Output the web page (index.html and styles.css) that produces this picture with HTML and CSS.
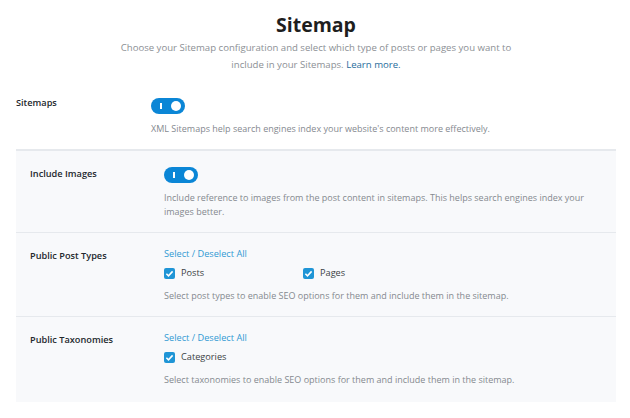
FILE: index.html
```html
<!DOCTYPE html>
<html lang="en">
<head>
    <meta charset="UTF-8">
    <meta name="viewport" content="width=device-width, initial-scale=1.0">
    <title>Sitemap</title>
    <link rel="stylesheet" href="styles.css">
</head>
<body>
    <div class="page">
        <header class="intro">
            <h1>Sitemap</h1>
            <p>Choose your Sitemap configuration and select which type of posts or pages you want to<br>include in your Sitemaps. <a href="#">Learn more.</a></p>
        </header>

        <div class="setting main-setting">
            <div class="setting-label">Sitemaps</div>
            <div class="setting-body">
                <span class="toggle on"><span class="knob"></span></span>
                <p class="desc">XML Sitemaps help search engines index your website's content more effectively.</p>
            </div>
        </div>

        <div class="panel">
            <div class="setting">
                <div class="setting-label">Include Images</div>
                <div class="setting-body">
                    <span class="toggle on"><span class="knob"></span></span>
                    <p class="desc">Include reference to images from the post content in sitemaps. This helps search engines index your images better.</p>
                </div>
            </div>

            <div class="setting">
                <div class="setting-label">Public Post Types</div>
                <div class="setting-body">
                    <a href="#" class="select-all">Select / Deselect All</a>
                    <div class="checks">
                        <label class="check"><span class="box"><svg viewBox="0 0 12 12"><path d="M2.6 6.2l2.3 2.3 4.5-4.8" /></svg></span>Posts</label>
                        <label class="check"><span class="box"><svg viewBox="0 0 12 12"><path d="M2.6 6.2l2.3 2.3 4.5-4.8" /></svg></span>Pages</label>
                    </div>
                    <p class="desc">Select post types to enable SEO options for them and include them in the sitemap.</p>
                </div>
            </div>

            <div class="setting">
                <div class="setting-label">Public Taxonomies</div>
                <div class="setting-body">
                    <a href="#" class="select-all">Select / Deselect All</a>
                    <div class="checks">
                        <label class="check"><span class="box"><svg viewBox="0 0 12 12"><path d="M2.6 6.2l2.3 2.3 4.5-4.8" /></svg></span>Categories</label>
                    </div>
                    <p class="desc">Select taxonomies to enable SEO options for them and include them in the sitemap.</p>
                </div>
            </div>
        </div>
    </div>
</body>
</html>
```

FILE: styles.css
```css
body {
    margin: 0;
    background-color: #fff;
    font-family: 'Open Sans', sans-serif;
    color: #23282d;
}

.page {
    width: 600px;
    margin: 0 14px 0 16px;
    padding-top: 11px;
}

.intro {
    text-align: center;
    margin-bottom: 22px;
}

.intro h1 {
    font-size: 19.5px;
    font-weight: 700;
    margin: 0;
    line-height: 28px;
    color: #1e1e1e;
}

.intro p {
    font-size: 9.6px;
    line-height: 17px;
    color: #8c9095;
    margin: 0;
}

.intro a {
    color: #1f6c9c;
    text-decoration: none;
}

.select-all {
    color: #3199d3;
    text-decoration: none;
    font-size: 9.2px;
    line-height: 16px;
    display: block;
}

.setting {
    display: flex;
    padding: 13px 14px 13px;
    border-bottom: 1px solid #e6e9ed;
}

.main-setting {
    padding: 0 0 13px;
}

.setting:last-child {
    border-bottom: none;
    padding-bottom: 15px;
}

.setting-label {
    width: 134px;
    flex-shrink: 0;
    font-size: 9.2px;
    font-weight: 600;
    line-height: 16px;
    padding-top: 2px;
    color: #23282d;
}

.main-setting .setting-label {
    width: 135px;
    padding-top: 0;
}

.setting-body {
    flex: 1;
}

.toggle {
    display: block;
    width: 34px;
    height: 16px;
    margin-top: 3px;
    border-radius: 8px;
    background-color: #0b86d6;
    position: relative;
}

/* little "on" tick on the left side of the switch */
.toggle::before {
    content: '';
    position: absolute;
    left: 9px;
    top: 5px;
    width: 1.5px;
    height: 6px;
    background: #fff;
}

.toggle .knob {
    position: absolute;
    right: 4px;
    top: 3px;
    width: 10px;
    height: 10px;
    border-radius: 50%;
    background: #fff;
}

.desc {
    font-size: 9px;
    line-height: 14px;
    color: #85898f;
    margin: 8px 0 0;
}

.checks {
    display: flex;
    margin: 3px 0 1px;
}

.check {
    display: flex;
    align-items: center;
    width: 139px;
    font-size: 9.2px;
    line-height: 16px;
    color: #3a3f44;
}

.box {
    width: 11px;
    height: 11px;
    border-radius: 2px;
    background-color: #1f95d6;
    margin-right: 6px;
    display: flex;
}

.box svg {
    width: 11px;
    height: 11px;
    fill: none;
    stroke: #fff;
    stroke-width: 1.7;
}

.panel {
    background-color: #f8f9fb;
    border-top: 1px solid #e6e9ed;
}
```
